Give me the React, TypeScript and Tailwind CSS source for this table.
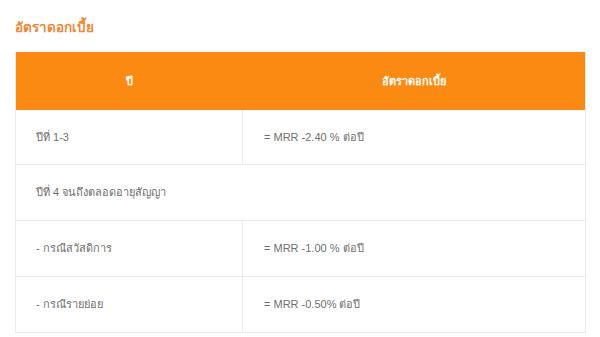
export default function App() {
  const font = { fontFamily: '"Liberation Sans", "Noto Sans", sans-serif' };
  return (
    <div className="w-[600px] h-[337px] bg-white overflow-hidden" style={font}>
      <div className="pl-[15px] pr-[14px] pt-[18px]">
        <div className="text-[13.5px] leading-[20px] font-bold text-[#ea8a3a] h-[34px]">อัตราดอกเบี้ย</div>
        <div className="border border-[#ebebeb] border-t-0">
          <div className="grid grid-cols-[227px_1fr] h-[58px] bg-[#fb8a12] text-white font-bold text-[11px]">
            <div className="flex items-center justify-center">ปี</div>
            <div className="flex items-center justify-center">อัตราดอกเบี้ย</div>
          </div>
          <div className="grid grid-cols-[227px_1fr] h-[55px] text-[11px] text-[#6f6f6f] border-b border-[#ebebeb]">
            <div className="flex items-center pl-[20px] border-r border-[#ebebeb]">ปีที่ 1-3</div>
            <div className="flex items-center pl-[21px]">= MRR -2.40 % ต่อปี</div>
          </div>
          <div className="h-[56px] flex items-center pl-[20px] text-[11px] text-[#6f6f6f] border-b border-[#ebebeb]">
            ปีที่ 4 จนถึงตลอดอายุสัญญา
          </div>
          <div className="grid grid-cols-[227px_1fr] h-[56px] text-[11px] text-[#6f6f6f] border-b border-[#ebebeb]">
            <div className="flex items-center pl-[20px] border-r border-[#ebebeb]">- กรณีสวัสดิการ</div>
            <div className="flex items-center pl-[21px]">= MRR -1.00 % ต่อปี</div>
          </div>
          <div className="grid grid-cols-[227px_1fr] h-[55px] text-[11px] text-[#6f6f6f]">
            <div className="flex items-center pl-[20px] border-r border-[#ebebeb]">- กรณีรายย่อย</div>
            <div className="flex items-center pl-[21px]">= MRR -0.50% ต่อปี</div>
          </div>
        </div>
      </div>
    </div>
  );
}
